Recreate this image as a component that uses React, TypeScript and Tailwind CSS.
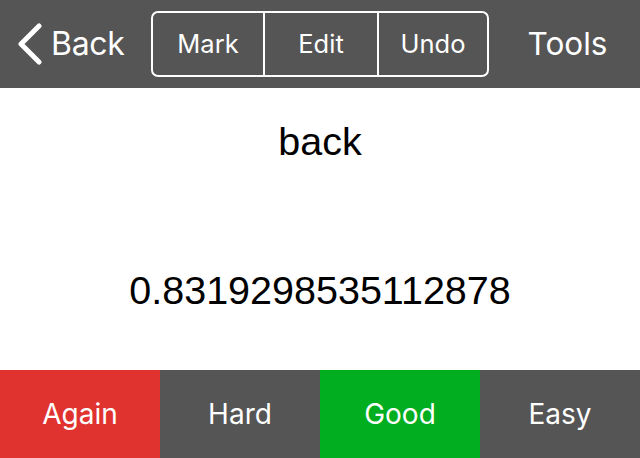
import React from "react";

const sf = { fontFamily: "Inter, 'Liberation Sans', sans-serif" };

export default function App() {
  return (
    <div className="w-[640px] h-[458px] flex flex-col bg-white overflow-hidden">
      <div className="h-[88px] bg-[#555555] flex items-center text-white" style={sf}>
        <div className="w-[151px] flex items-center pl-[16px] gap-[7px]">
          <svg width="28" height="42" viewBox="0 0 28 42" className="shrink-0">
            <path d="M23 3 L5 21 L23 39" fill="none" stroke="white" strokeWidth="5" strokeLinecap="round" strokeLinejoin="round" />
          </svg>
          <span className="text-[32px] leading-none tracking-[-0.3px]">Back</span>
        </div>
        <div className="w-[338px] h-[66px] flex border-2 border-white rounded-[7px]">
          <div className="w-[112px] flex items-center justify-center text-[25.5px] border-r-2 border-white">Mark</div>
          <div className="w-[114px] flex items-center justify-center text-[25.5px] border-r-2 border-white">Edit</div>
          <div className="flex-1 flex items-center justify-center text-[25.5px]">Undo</div>
        </div>
        <div className="flex-1 flex items-center justify-center pl-[6px] text-[31.5px] leading-none">Tools</div>
      </div>
      <div
        className="flex-1 flex flex-col items-center text-black"
        style={{ fontFamily: "'Liberation Sans', Arial, sans-serif" }}
      >
        <div className="mt-[33px] text-[39.5px] leading-[40px]">back</div>
        <div className="mt-[109px] text-[39.5px] leading-[40px]">0.8319298535112878</div>
      </div>
      <div className="h-[88px] grid grid-cols-4 text-white text-[28px]" style={sf}>
        <div className="bg-[#e0322f] flex items-center justify-center">Again</div>
        <div className="bg-[#555555] flex items-center justify-center">Hard</div>
        <div className="bg-[#00ae20] flex items-center justify-center">Good</div>
        <div className="bg-[#555555] flex items-center justify-center">Easy</div>
      </div>
    </div>
  );
}
